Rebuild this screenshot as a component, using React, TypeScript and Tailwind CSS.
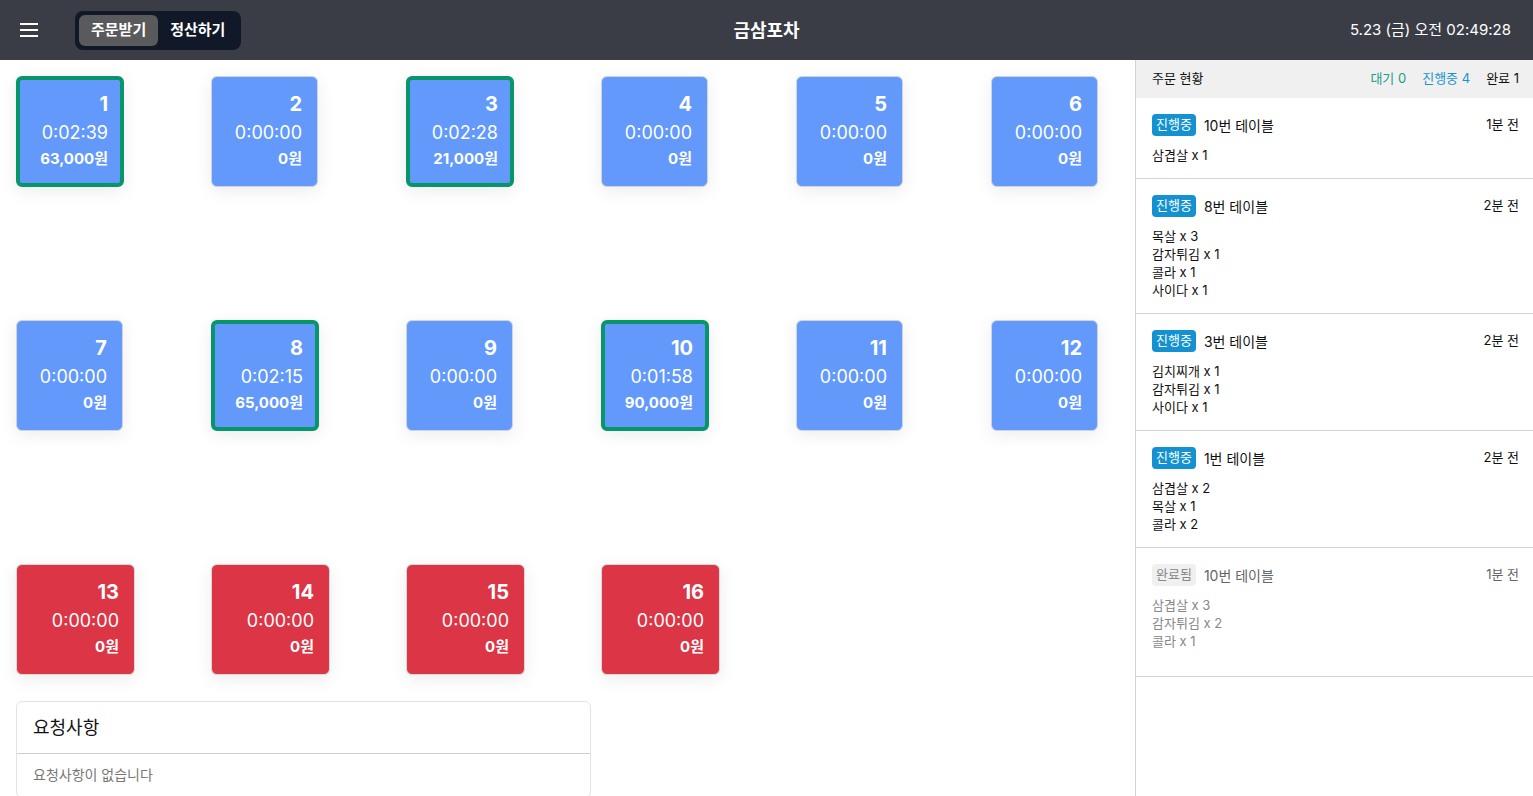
import React from 'react';

type Table = { no: number; time: string; price: string; active?: boolean; red?: boolean };

const tables: Table[] = [
  { no: 1, time: '0:02:39', price: '63,000원', active: true },
  { no: 2, time: '0:00:00', price: '0원' },
  { no: 3, time: '0:02:28', price: '21,000원', active: true },
  { no: 4, time: '0:00:00', price: '0원' },
  { no: 5, time: '0:00:00', price: '0원' },
  { no: 6, time: '0:00:00', price: '0원' },
  { no: 7, time: '0:00:00', price: '0원' },
  { no: 8, time: '0:02:15', price: '65,000원', active: true },
  { no: 9, time: '0:00:00', price: '0원' },
  { no: 10, time: '0:01:58', price: '90,000원', active: true },
  { no: 11, time: '0:00:00', price: '0원' },
  { no: 12, time: '0:00:00', price: '0원' },
  { no: 13, time: '0:00:00', price: '0원', red: true },
  { no: 14, time: '0:00:00', price: '0원', red: true },
  { no: 15, time: '0:00:00', price: '0원', red: true },
  { no: 16, time: '0:00:00', price: '0원', red: true },
];

type Order = { done?: boolean; table: string; ago: string; items: string[] };

const orders: Order[] = [
  { table: '10번 테이블', ago: '1분 전', items: ['삼겹살 x 1'] },
  { table: '8번 테이블', ago: '2분 전', items: ['목살 x 3', '감자튀김 x 1', '콜라 x 1', '사이다 x 1'] },
  { table: '3번 테이블', ago: '2분 전', items: ['김치찌개 x 1', '감자튀김 x 1', '사이다 x 1'] },
  { table: '1번 테이블', ago: '2분 전', items: ['삼겹살 x 2', '목살 x 1', '콜라 x 2'] },
  { done: true, table: '10번 테이블', ago: '1분 전', items: ['삼겹살 x 3', '감자튀김 x 2', '콜라 x 1'] },
];

const TableCard = ({ t }: { t: Table }) => {
  const base = t.red
    ? 'w-[119px] bg-[#dc3545] border border-[#d9d9d9] pr-[15px]'
    : t.active
    ? 'w-[108px] bg-[#6299fb] border-4 border-[#079669] pr-[12px]'
    : 'w-[107px] bg-[#6299fb] border border-[#d0d4dc] pr-[15px]';
  return (
    <div className={`${base} h-[111px] rounded-md shadow-[0_4px_18px_rgba(0,0,0,0.08)] flex flex-col items-end justify-center pb-1 text-white`}>
      <div className="text-[20px] font-bold leading-[28px]">{t.no}</div>
      <div className="text-[18px] leading-[30px]">{t.time}</div>
      <div className="text-[15px] font-bold leading-[22px]">{t.price}</div>
    </div>
  );
};

export default function App() {
  return (
    <div className="w-[1533px] h-[796px] overflow-hidden bg-white flex flex-col font-['Inter','Noto_Sans_CJK_KR',sans-serif] text-[#111]">
      <header className="h-[60px] shrink-0 bg-[#3a3d46] flex items-center px-5 relative">
        <svg width="18" height="14" viewBox="0 0 18 14" className="shrink-0">
          <rect x="0" y="0" width="18" height="2" fill="#fff" />
          <rect x="0" y="6" width="18" height="2" fill="#fff" />
          <rect x="0" y="12" width="18" height="2" fill="#fff" />
        </svg>
        <div className="ml-[37px] bg-[#111827] rounded-lg p-1 flex items-center h-[39px]">
          <div className="h-[31px] px-3 rounded-md bg-[#5a5a5c] text-white text-[15px] font-bold flex items-center">주문받기</div>
          <div className="h-[31px] px-3 text-white text-[15px] font-bold flex items-center">정산하기</div>
        </div>
        <div className="absolute left-1/2 -translate-x-1/2 text-white text-[18px] font-bold">금삼포차</div>
        <div className="ml-auto text-white text-[15px] mr-[2px]">5.23 (금) 오전 02:49:28</div>
      </header>
      <div className="flex flex-1 min-h-0">
        <main className="flex-1 px-4 pt-4">
          <div className="grid grid-cols-[repeat(6,107px)] gap-x-[88px] gap-y-[133px]">
            {tables.map((t) => (
              <TableCard key={t.no} t={t} />
            ))}
          </div>
          <div className="mt-[26px] w-[575px] border border-[#e3e3e3] rounded-md">
            <div className="h-[52px] px-4 flex items-center text-[18px] border-b border-[#cfcfcf]">요청사항</div>
            <div className="px-4 pt-[10px] pb-3 text-[14px] text-[#777]">요청사항이 없습니다</div>
          </div>
        </main>
        <aside className="w-[398px] shrink-0 border-l border-[#d4d4d4] flex flex-col">
          <div className="h-[38px] bg-[#f0f0f0] flex items-center pl-4 pr-[14px] text-[13px]">
            <span>주문 현황</span>
            <span className="ml-auto text-[#169e86]">대기 0</span>
            <span className="ml-4 text-[#1a95c9]">진행중 4</span>
            <span className="ml-4">완료 1</span>
          </div>
          {orders.map((o, i) => (
            <div key={i} className={`pl-4 pr-[14px] pt-4 border-b border-[#d4d4d4] ${o.done ? 'pb-[26px]' : 'pb-[14px]'}`}>
              <div className="flex items-center h-[22px] text-[13px]">
                <span className={`px-[4px] h-[22px] flex items-center rounded ${o.done ? 'bg-[#f0f0f0] text-[#888]' : 'bg-[#1391d0] text-white'}`}>
                  {o.done ? '완료됨' : '진행중'}
                </span>
                <span className={`ml-2 text-[14px] ${o.done ? 'text-[#666]' : ''}`}>{o.table}</span>
                <span className={`ml-auto ${o.done ? 'text-[#666]' : ''}`}>{o.ago}</span>
              </div>
              <div className={`mt-[10px] text-[13px] leading-[18px] ${o.done ? 'text-[#888]' : ''}`}>
                {o.items.map((it) => (
                  <div key={it}>{it}</div>
                ))}
              </div>
            </div>
          ))}
        </aside>
      </div>
    </div>
  );
}
